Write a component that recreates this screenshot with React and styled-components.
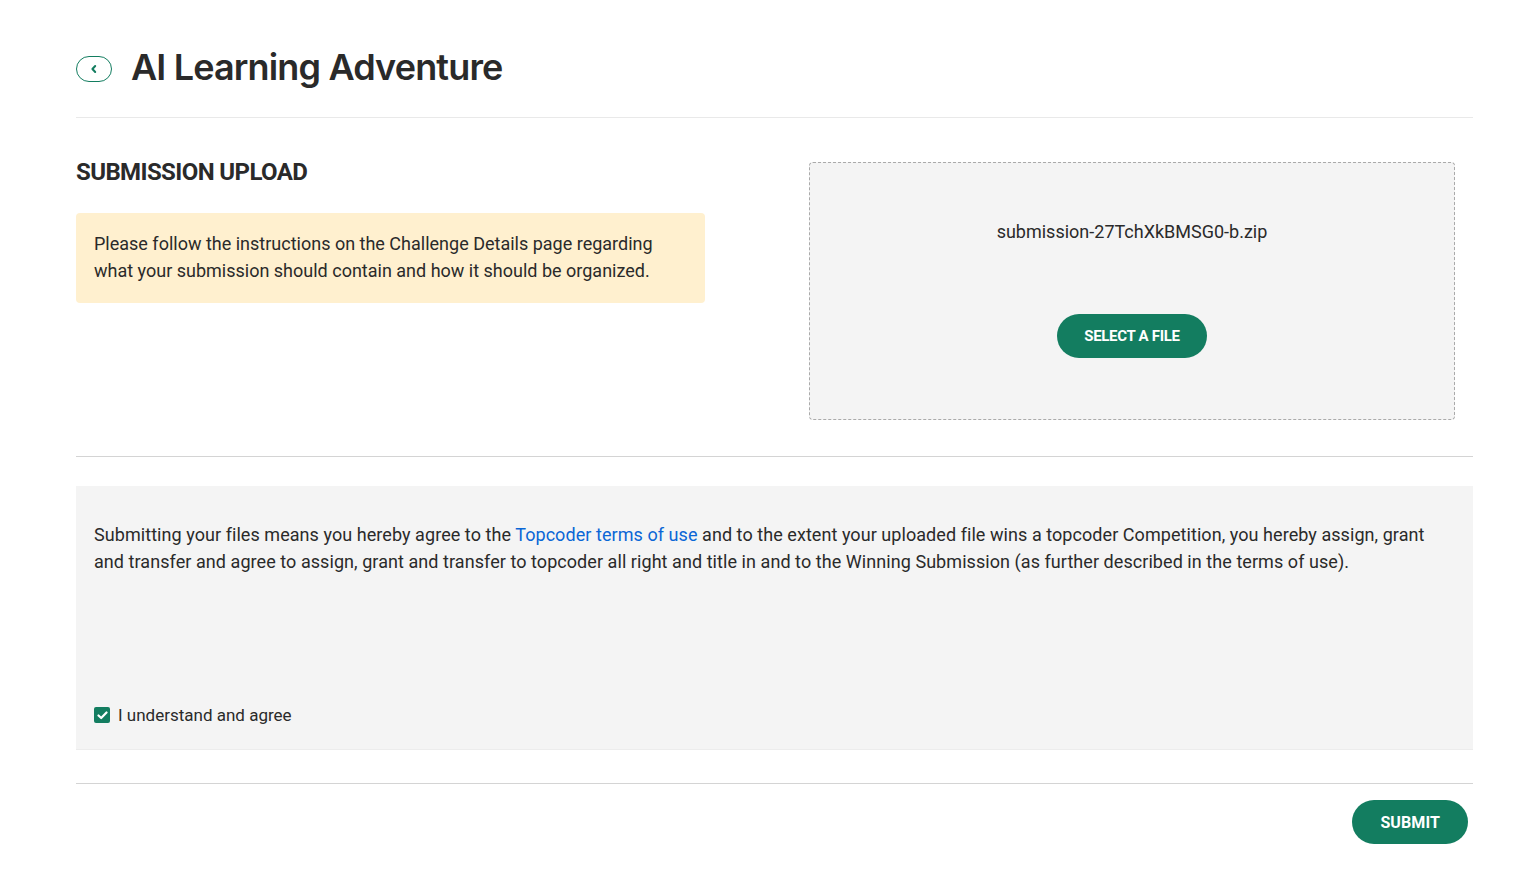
import styled, { createGlobalStyle } from "styled-components";

const GlobalStyle = createGlobalStyle`
  body {
    margin: 0;
    background: #fff;
    font-family: Roboto, "Liberation Sans", sans-serif;
    color: #2a2a2a;
  }
`;

const Page = styled.div`
  padding: 34px 53px 40px 76px;
`;

const Header = styled.header`
  display: flex;
  align-items: center;
  gap: 19px;
  height: 66px;
  border-bottom: 1px solid #e9e9e9;
  padding-bottom: 17px;
`;

const BackButton = styled.button`
  width: 36px;
  height: 26px;
  border: 1px solid #137d60;
  border-radius: 13px;
  background: #fff;
  color: #137d60;
  display: flex;
  align-items: center;
  justify-content: center;
  padding: 0;
  margin-top: 4px;
  cursor: pointer;
`;

const Title = styled.h1`
  margin: 0;
  font-family: Inter, Roboto, sans-serif;
  font-weight: 600;
  font-size: 36px;
  letter-spacing: -0.85px;
  color: #2a2a2a;
`;

const UploadRow = styled.section`
  display: grid;
  grid-template-columns: 629px 1fr;
  gap: 104px;
  padding: 44px 18px 36px 0;
  border-bottom: 1px solid #d4d4d4;
`;

const SectionTitle = styled.h2`
  margin: -2px 0 29px;
  font-family: Roboto, sans-serif;
  font-weight: 700;
  font-size: 24px;
  letter-spacing: -0.6px;
  line-height: 24px;
  color: #2a2a2a;
`;

const Notice = styled.div`
  background: #fff0cf;
  border-radius: 4px;
  padding: 17px 18px 19px;
  font-size: 18px;
  line-height: 27px;
  color: #2a2a2a;
`;

const DropZone = styled.div`
  height: 258px;
  border: 1px dashed #aaaaaa;
  border-radius: 4px;
  background: #f4f4f4;
  display: flex;
  flex-direction: column;
  align-items: center;
  padding-top: 55px;
  box-sizing: border-box;
`;

const FileName = styled.div`
  font-size: 18px;
  line-height: 27px;
  color: #2a2a2a;
  margin-bottom: 69px;
`;

const PillButton = styled.button`
  height: 44px;
  padding: 0 ${(p) => p.pad}px;
  border: none;
  border-radius: 22px;
  background: #137d60;
  color: #fff;
  font-family: Roboto, sans-serif;
  font-weight: 700;
  font-size: ${(p) => p.size}px;
  letter-spacing: ${(p) => p.spacing}px;
  text-transform: uppercase;
  cursor: pointer;
`;

const TermsPanel = styled.section`
  margin-top: 29px;
  background: #f4f4f4;
  height: 264px;
  padding: 35px 18px 24px;
  box-sizing: border-box;
  display: flex;
  flex-direction: column;
  justify-content: space-between;
  border-bottom: 1px solid #ececec;
`;

const TermsText = styled.p`
  margin: 0;
  font-size: 18px;
  line-height: 27px;
  color: #2a2a2a;
  letter-spacing: 0.06px;
`;

const TermsLink = styled.a`
  color: #0a66d6;
  text-decoration: none;
`;

const Agree = styled.label`
  display: flex;
  align-items: center;
  gap: 8px;
  font-size: 17px;
  color: #2a2a2a;
`;

const Check = styled.span`
  width: 16px;
  height: 16px;
  border-radius: 2px;
  background: #137d60;
  display: flex;
  align-items: center;
  justify-content: center;
`;

const Footer = styled.footer`
  margin-top: 33px;
  border-top: 1px solid #d4d4d4;
  padding: 16px 5px 0 0;
  display: flex;
  justify-content: flex-end;
`;

export default function App() {
  return (
    <>
      <GlobalStyle />
      <Page>
        <Header>
          <BackButton aria-label="Back">
            <svg width="8" height="10" viewBox="0 0 8 10" fill="none">
              <path d="M5.2 2L2.4 5L5.2 8" stroke="#137d60" strokeWidth="2" strokeLinecap="round" strokeLinejoin="round" />
            </svg>
          </BackButton>
          <Title>AI Learning Adventure</Title>
        </Header>

        <UploadRow>
          <div>
            <SectionTitle>SUBMISSION UPLOAD</SectionTitle>
            <Notice>
              Please follow the instructions on the Challenge Details page regarding
              what your submission should contain and how it should be organized.
            </Notice>
          </div>
          <DropZone>
            <FileName>submission-27TchXkBMSG0-b.zip</FileName>
            <PillButton pad={27} size={15} spacing={-0.3}>Select a file</PillButton>
          </DropZone>
        </UploadRow>

        <TermsPanel>
          <TermsText>
            Submitting your files means you hereby agree to the{" "}
            <TermsLink href="#">Topcoder terms of use</TermsLink> and to the extent your
            uploaded file wins a topcoder Competition, you hereby assign, grant and transfer
            and agree to assign, grant and transfer to topcoder all right and title in and to
            the Winning Submission (as further described in the terms of use).
          </TermsText>
          <Agree>
            <Check>
              <svg width="11" height="9" viewBox="0 0 11 9" fill="none">
                <path d="M1.5 4.5L4.2 7L9.5 1.5" stroke="#fff" strokeWidth="2.2" strokeLinecap="round" strokeLinejoin="round" />
              </svg>
            </Check>
            I understand and agree
          </Agree>
        </TermsPanel>

        <Footer>
          <PillButton pad={28} size={16} spacing={0.1}>Submit</PillButton>
        </Footer>
      </Page>
    </>
  );
}
